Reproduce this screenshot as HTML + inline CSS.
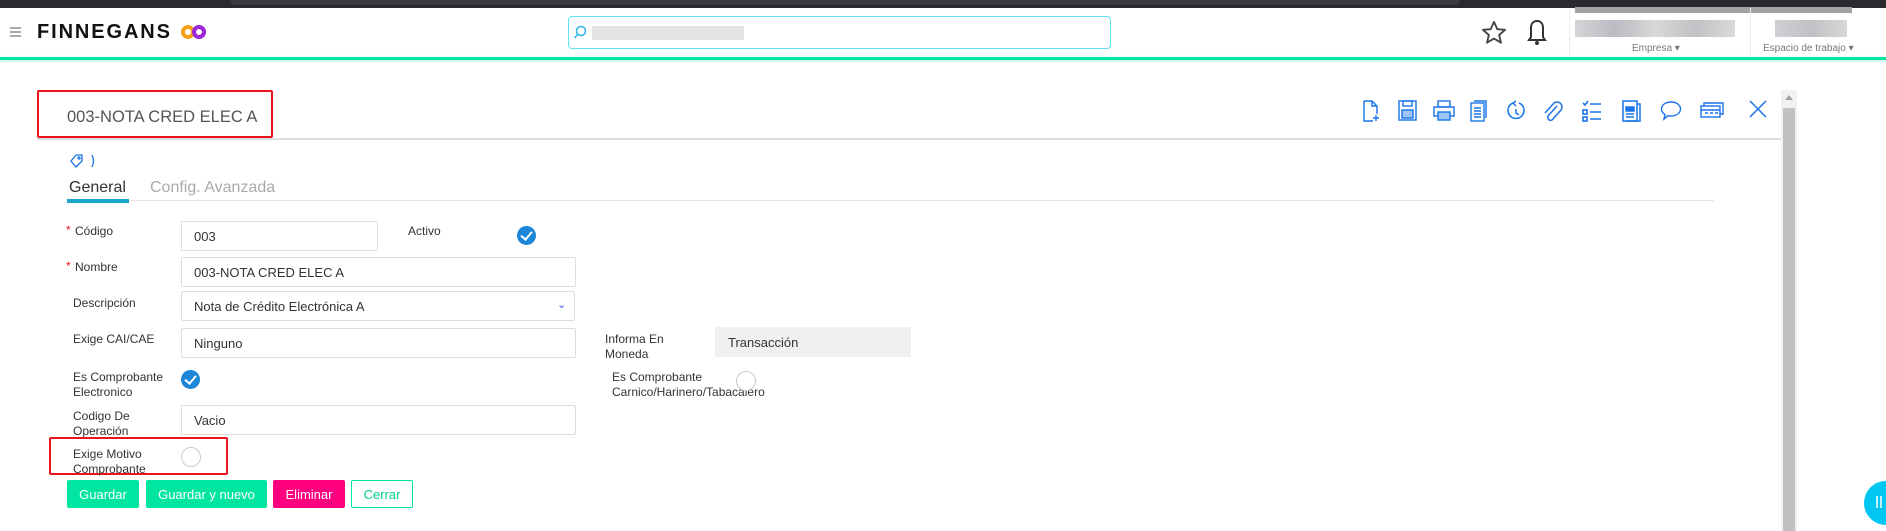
<!DOCTYPE html>
<html><head><meta charset="utf-8"><style>
*{box-sizing:border-box;margin:0;padding:0}
body{width:1886px;height:531px;overflow:hidden;background:#fff;font-family:"Liberation Sans",Arial,sans-serif;position:relative;color:#333}
.a{position:absolute}
.lbl{position:absolute;font-size:12px;color:#333;line-height:15px}
.inp{position:absolute;border:1px solid #ddd;border-radius:2px;font-size:13px;color:#333;padding-left:12px;display:flex;align-items:center;background:#fff}
.chk{position:absolute;width:19px;height:19px;border-radius:50%;background:#1c87d9}
.chk::after{content:"";position:absolute;left:6px;top:3px;width:5px;height:9px;border:solid #fff;border-width:0 2.5px 2.5px 0;transform:rotate(40deg)}
.rad{position:absolute;width:20px;height:20px;border-radius:50%;border:1px solid #ccc;background:#fff}
.btn{position:absolute;top:480px;height:28px;font-size:13px;display:flex;align-items:center;justify-content:center;border-radius:2px;color:#fff}
.ic{position:absolute;top:100px}
</style></head><body>
<div class="a" style="left:0;top:0;width:1886px;height:8px;background:#2a2a2e"></div>
<div class="a" style="left:230px;top:0;width:1230px;height:5px;background:#3b3b40;border-radius:0 0 6px 6px"></div>
<div class="a" style="left:1575px;top:7px;width:277px;height:6px;background:#a3a3a3"></div>
<div class="a" style="left:10px;top:27px;width:11px;height:2px;background:#aaa;box-shadow:0 4px 0 #aaa,0 8px 0 #aaa"></div>
<div class="a" style="left:37px;top:21px;font-size:20px;font-weight:bold;letter-spacing:1.9px;color:#111">FINNEGANS</div>
<svg class="a" style="left:180px;top:24px" width="28" height="16" viewBox="0 0 28 16"><circle cx="8" cy="8" r="5" fill="none" stroke="#f7a21b" stroke-width="4"/><circle cx="19" cy="8" r="5" fill="none" stroke="#9b27d6" stroke-width="4"/></svg>
<div class="a" style="left:568px;top:16px;width:543px;height:33px;border:1px solid #5ee3f5;border-radius:4px"></div>
<svg class="a" style="left:573px;top:25px" width="14" height="16"><circle cx="8" cy="6" r="4.5" fill="none" stroke="#2bb6e8" stroke-width="1.5"/><path d="M5 9L1.5 13" stroke="#2bb6e8" stroke-width="1.5"/></svg>
<div class="a" style="left:592px;top:26px;width:152px;height:14px;background:#e3e3e3"></div>
<svg class="a" style="left:1480px;top:19px" width="28" height="28" viewBox="0 0 24 24"><path d="M12 2.5l2.8 6.2 6.7.6-5.1 4.4 1.6 6.6L12 16.8l-6 3.5 1.6-6.6-5.1-4.4 6.7-.6z" fill="none" stroke="#444" stroke-width="1.6" stroke-linejoin="round"/></svg>
<svg class="a" style="left:1525px;top:18px" width="24" height="30" viewBox="0 0 24 30"><path d="M12 3c-4 0-6 3-6 7v9l-2 3h16l-2-3v-9c0-4-2-7-6-7z" fill="none" stroke="#333" stroke-width="2"/><circle cx="12" cy="25" r="2" fill="#333"/></svg>
<div class="a" style="left:1569px;top:8px;width:1px;height:48px;background:#eee"></div>
<div class="a" style="left:1750px;top:8px;width:1px;height:48px;background:#eee"></div>
<div class="a" style="left:1575px;top:20px;width:160px;height:17px;background:linear-gradient(90deg,#d5d5d8,#bbbbc2,#d8d8d8,#c2c2c6,#dadada)"></div>
<div class="a" style="left:1775px;top:20px;width:72px;height:17px;background:linear-gradient(90deg,#d0d0d4,#c0c0c5,#d8d8d8)"></div>
<div class="a" style="left:1632px;top:43px;font-size:10px;color:#777">Empresa ▾</div>
<div class="a" style="left:1763px;top:43px;font-size:10px;color:#777">Espacio de trabajo ▾</div>
<div class="a" style="left:0;top:57px;width:1886px;height:3px;background:#00e3a1;box-shadow:0 1px 3px #9ff5d8"></div>

<div class="a" style="left:37px;top:90px;width:236px;height:48px;border:2px solid #e8141e;border-radius:2px"></div>
<div class="a" style="left:67px;top:108px;font-size:16.5px;color:#555">003-NOTA CRED ELEC A</div>
<div class="a" style="left:37px;top:138px;width:1744px;height:2px;background:#ddd"></div>

<svg class="ic" style="left:1362px" width="20" height="22" viewBox="0 0 20 22" fill="none" stroke="#1a73e8" stroke-width="1.4"><path d="M2 1h8l5 5v8M2 1v20h9M10 1v5h5M14 15v6M11 18h6"/></svg>
<svg class="ic" style="left:1398px" width="20" height="22" viewBox="0 0 20 22" fill="none" stroke="#1a73e8" stroke-width="1.4"><rect x="1" y="1" width="17" height="19"/><rect x="5" y="1" width="9" height="5"/><rect x="4" y="10" width="11" height="8" fill="#9cc4f5"/></svg>
<svg class="ic" style="left:1433px" width="22" height="22" viewBox="0 0 22 22" fill="none" stroke="#1a73e8" stroke-width="1.4"><rect x="5" y="1" width="12" height="6"/><rect x="1" y="7" width="20" height="9"/><rect x="5" y="12" width="12" height="8" fill="#9cc4f5"/></svg>
<svg class="ic" style="left:1470px" width="18" height="22" viewBox="0 0 18 22" fill="none" stroke="#1a73e8" stroke-width="1.4"><rect x="1" y="3" width="13" height="18"/><path d="M4 1h12v17M4 8h7M4 11h7M4 14h7M4 17h7"/></svg>
<svg class="ic" style="left:1505px" width="22" height="22" viewBox="0 0 22 22" fill="none" stroke="#1a73e8" stroke-width="1.5"><path d="M8 3A8 8 0 1 0 14 3M8 3l3-2M8 3l3 3M11 9v4l3 2"/></svg>
<svg class="ic" style="left:1542px" width="22" height="22" viewBox="0 0 22 22" fill="none" stroke="#1a73e8" stroke-width="1.5"><path d="M15 6L6 16a3 3 0 0 0 4 4l9-10a5 5 0 0 0-7-7L3 13"/></svg>
<svg class="ic" style="left:1582px" width="20" height="22" viewBox="0 0 20 22" fill="none" stroke="#1a73e8" stroke-width="1.6"><path d="M1 3l2 2 3-4M8 4h11M8 12h11M8 19h11"/><rect x="1" y="10" width="4" height="4"/><rect x="1" y="17" width="4" height="4"/></svg>
<svg class="ic" style="left:1622px" width="20" height="22" viewBox="0 0 20 22" fill="none" stroke="#1a73e8" stroke-width="1.5"><rect x="1" y="1" width="14" height="20"/><path d="M15 4h3v17H4"/><rect x="4" y="7" width="8" height="4" fill="#1a73e8"/><path d="M4 14h8M4 17h8"/></svg>
<svg class="ic" style="left:1660px" width="22" height="22" viewBox="0 0 22 22" fill="none" stroke="#1a73e8" stroke-width="1.4"><path d="M11 2c5.5 0 9.5 3 9.5 7s-4 7-9.5 7c-1 0-2 0-3-.3L4 19l1-4.5C2.5 13 1.5 11 1.5 9 1.5 5 5.5 2 11 2z"/></svg>
<svg class="ic" style="left:1700px;top:101px" width="24" height="18" viewBox="0 0 24 18" fill="none" stroke="#1a73e8" stroke-width="1.4"><rect x="1" y="5" width="19" height="11"/><path d="M4 5V2h19v11h-3M1 9h19M5 12h3M10 12h3M15 12h3"/></svg>
<svg class="ic" style="left:1749px" width="18" height="18" viewBox="0 0 18 18" stroke="#1a73e8" stroke-width="1.5"><path d="M1 1l16 16M17 1L1 17"/></svg>

<div class="a" style="left:1781px;top:90px;width:16px;height:441px;background:#f1f1f1"></div>
<div class="a" style="left:1783px;top:108px;width:12px;height:423px;background:#c1c1c1"></div>
<div class="a" style="left:1785px;top:95px;width:0;height:0;border-left:4px solid transparent;border-right:4px solid transparent;border-bottom:5px solid #a3a3a3"></div>

<svg class="a" style="left:68px;top:153px" width="30" height="16" viewBox="0 0 30 16" fill="none" stroke="#1a73e8" stroke-width="1.3"><path d="M3 8l5-6h6v6l-6 6z"/><circle cx="11" cy="5" r="1"/><path d="M24 2q3 6 0 12"/></svg>

<div class="a" style="left:69px;top:179px;font-size:16px;color:#333">General</div>
<div class="a" style="left:150px;top:179px;font-size:16px;color:#aaa">Config. Avanzada</div>
<div class="a" style="left:67px;top:200px;width:1647px;height:1px;background:#e5e5e5"></div>
<div class="a" style="left:67px;top:199px;width:62px;height:4px;background:#1aa6c8"></div>

<div class="a" style="left:66px;top:223px;color:#e8141e;font-size:12px">*</div>
<div class="lbl" style="left:75px;top:224px">Código</div>
<div class="inp" style="left:181px;top:221px;width:197px;height:30px">003</div>
<div class="lbl" style="left:408px;top:224px">Activo</div>
<div class="chk" style="left:517px;top:226px"></div>
<div class="a" style="left:66px;top:259px;color:#e8141e;font-size:12px">*</div>
<div class="lbl" style="left:75px;top:260px">Nombre</div>
<div class="inp" style="left:181px;top:257px;width:395px;height:30px">003-NOTA CRED ELEC A</div>
<div class="lbl" style="left:73px;top:296px">Descripción</div>
<div class="inp" style="left:181px;top:291px;width:394px;height:30px">Nota de Crédito Electrónica A</div>
<div class="a" style="left:557px;top:298px;font-size:11px;color:#3a55e0">⌄</div>
<div class="lbl" style="left:73px;top:332px">Exige CAI/CAE</div>
<div class="inp" style="left:181px;top:328px;width:395px;height:30px">Ninguno</div>
<div class="lbl" style="left:605px;top:332px">Informa En<br>Moneda</div>
<div class="inp" style="left:715px;top:327px;width:196px;height:30px;background:#eff0f2;border-color:#eff0f2">Transacción</div>
<div class="lbl" style="left:73px;top:370px">Es Comprobante<br>Electronico</div>
<div class="chk" style="left:181px;top:370px"></div>
<div class="lbl" style="left:612px;top:370px">Es Comprobante<br>Carnico/Harinero/Tabacalero</div>
<div class="rad" style="left:736px;top:371px"></div>
<div class="lbl" style="left:73px;top:409px">Codigo De<br>Operación</div>
<div class="inp" style="left:181px;top:405px;width:395px;height:30px">Vacio</div>
<div class="a" style="left:49px;top:437px;width:179px;height:38px;border:2px solid #e8141e;border-radius:2px"></div>
<div class="lbl" style="left:73px;top:447px">Exige Motivo<br>Comprobante</div>
<div class="rad" style="left:181px;top:447px"></div>

<div class="btn" style="left:67px;width:72px;background:#00e5a0">Guardar</div>
<div class="btn" style="left:146px;width:121px;background:#00e5a0">Guardar y nuevo</div>
<div class="btn" style="left:273px;width:72px;background:#ff0080">Eliminar</div>
<div class="btn" style="left:351px;width:62px;background:#fff;border:1px solid #00e5a0;color:#00d090">Cerrar</div>

<div class="a" style="left:1864px;top:481px;width:44px;height:44px;border-radius:50%;background:#00c6f2"></div>
<div class="a" style="left:1876px;top:496px;width:2px;height:12px;background:#bff0ff;box-shadow:4px 0 0 #bff0ff"></div>
</body></html>
